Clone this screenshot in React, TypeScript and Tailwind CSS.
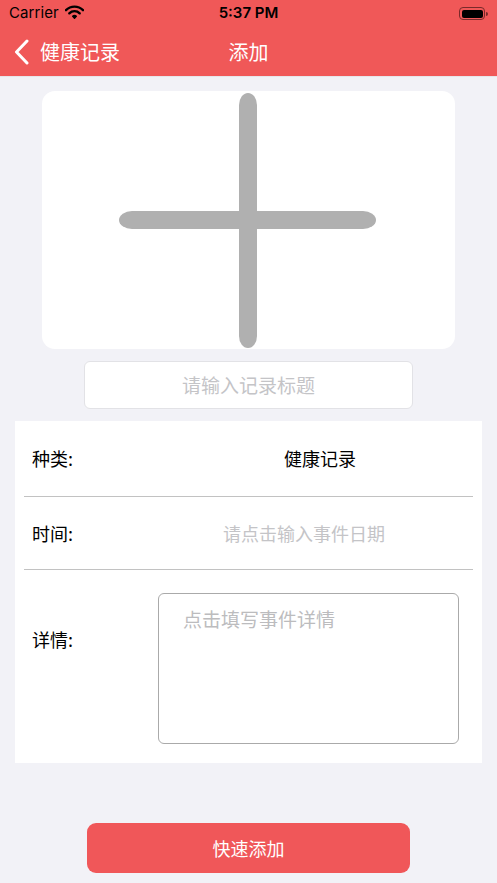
function StatusBar() {
    return (
        <div className="h-[27px] flex items-center justify-between px-[9px] text-black">
            <div className="flex items-center w-[120px]">
                <span className="text-[15px] font-['Inter',sans-serif] tracking-[0.1px]">Carrier</span>
                <svg width="19" height="14" viewBox="0 0 19 14" className="ml-[6px] mb-[3px]">
                    <path d="M1 5.2a12 12 0 0 1 17 0" stroke="black" strokeWidth="2.4" fill="none" strokeLinecap="round" />
                    <path d="M4.3 8.3a7.4 7.4 0 0 1 10.4 0" stroke="black" strokeWidth="2.4" fill="none" strokeLinecap="round" />
                    <path d="M7.7 11.3a2.5 2.5 0 0 1 3.6 0L9.5 13.2z" fill="black" stroke="black" strokeWidth="1.4" strokeLinejoin="round" />
                </svg>
            </div>
            <span className="text-[15px] font-semibold font-['Inter',sans-serif]">5:37 PM</span>
            <div className="w-[120px] flex justify-end items-center">
                <div className="w-[26px] h-[13px] rounded-[4px] border border-[#7a2a2a] p-[1.5px]">
                    <div className="w-full h-full rounded-[2px] bg-black" />
                </div>
                <div className="w-[1.5px] h-[4px] bg-[#7a2a2a] ml-[1px] rounded-r-sm" />
            </div>
        </div>
    );
}

function PlusIcon() {
    return (
        <svg width="413" height="258" viewBox="0 0 413 258">
            <defs>
                <filter id="soft" x="-5%" y="-5%" width="110%" height="110%">
                    <feGaussianBlur stdDeviation="0.6" />
                </filter>
            </defs>
            <g fill="#b0b0b0" filter="url(#soft)">
                <rect x="77" y="120" width="257" height="18" rx="13" ry="9" />
                <rect x="197" y="2" width="18" height="255" rx="9" ry="12" />
            </g>
        </svg>
    );
}

export default function App() {
    return (
        <div className="w-[497px] h-[883px] bg-[#f2f2f7] flex flex-col font-['Noto_Sans_CJK_SC','Noto_Sans',sans-serif] overflow-hidden">
            <div className="bg-[#f05858] h-[77px] border-b border-[#e6e6ea]">
                <StatusBar />
                <div className="relative h-[50px] flex items-center">
                    <div className="flex items-center pl-[14px] text-white">
                        <svg width="16" height="26" viewBox="0 0 16 26">
                            <path d="M13 2L2.5 13L13 24" stroke="white" strokeWidth="3" fill="none" strokeLinecap="round" strokeLinejoin="round" />
                        </svg>
                        <span className="text-[20px] ml-[10px] leading-none">健康记录</span>
                    </div>
                    <span className="absolute left-1/2 -translate-x-1/2 text-white text-[20px] leading-none">添加</span>
                </div>
            </div>

            <div className="mt-[14px] mx-auto w-[413px] h-[258px] rounded-[13px] bg-white overflow-hidden">
                <PlusIcon />
            </div>

            <div className="mt-[12px] mx-auto w-[329px] h-[48px] rounded-[6px] border border-[#e2e2e6] bg-white flex items-center justify-center">
                <span className="text-[19px] text-[#c4c4c7]">请输入记录标题</span>
            </div>

            <div className="mt-[12px] mx-[15px] bg-white h-[342px] flex flex-col">
                <div className="h-[75px] flex items-center pl-[17px]">
                    <span className="text-[18px] text-black w-[252px]">种类:</span>
                    <span className="text-[18px] text-black">健康记录</span>
                </div>
                <div className="mx-[9px] border-t-[1.5px] border-[#c2c2c2]" />
                <div className="h-[72px] flex items-center pl-[17px]">
                    <span className="text-[18px] text-black w-[191px]">时间:</span>
                    <span className="text-[18px] text-[#c4c4c7]">请点击输入事件日期</span>
                </div>
                <div className="mx-[9px] border-t-[1.5px] border-[#c2c2c2]" />
                <div className="flex pl-[17px] pt-[23px]">
                    <span className="text-[18px] text-black w-[126px] mt-[33px] leading-[27px]">详情:</span>
                    <div className="w-[301px] h-[151px] rounded-[6px] border-[1.5px] border-[#aaaaaa] px-[24px] pt-[11px]">
                        <span className="text-[19px] text-[#bcbcbe]">点击填写事件详情</span>
                    </div>
                </div>
            </div>

            <div className="mt-[60px] mx-auto w-[323px] h-[50px] rounded-[9px] bg-[#f05759] flex items-center justify-center">
                <span className="text-white text-[18px]">快速添加</span>
            </div>
        </div>
    );
}
